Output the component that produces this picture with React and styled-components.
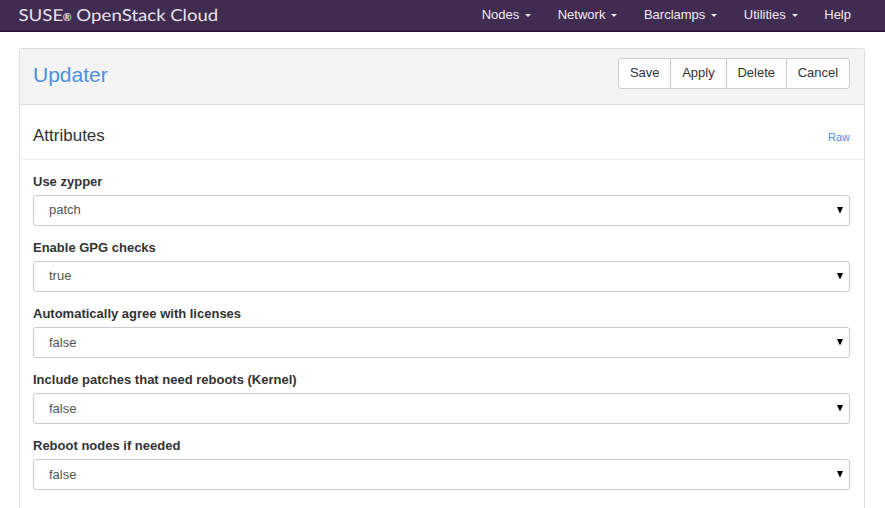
import React from "react";
import styled, { createGlobalStyle } from "styled-components";

const GlobalStyle = createGlobalStyle`
  * { box-sizing: border-box; }
  html, body { margin: 0; height: 100%; }
  body {
    background: #fff;
    color: #333;
    font: 13px/18px "Liberation Sans", Arial, sans-serif;
  }
`;

const Navbar = styled.header`
  display: flex;
  justify-content: space-between;
  height: 32px;
  padding: 0 34px 0 18px;
  background: #412c51;
  border-bottom: 1px solid #2a1138;
  box-shadow: inset 0 -1px 0 #38204a;
`;

const Brand = styled.svg`
  width: 202px;
  height: 30px;
  fill: #e6e1e9;
  font: 400 16.5px Lato, sans-serif;
  text-rendering: geometricPrecision;
`;

const Registered = styled.text`
  font-size: 11px;
  font-weight: 700;
`;

const Nav = styled.nav`
  display: flex;
  gap: 26.5px;
`;

const NavItem = styled.a`
  display: flex;
  align-items: center;
  height: 30px;
  color: #eeeaf1;
`;

const Caret = styled.span`
  margin: 1px 0 0 6px;
  border-top: 3px solid #eeeaf1;
  border-left: 3px solid transparent;
  border-right: 3px solid transparent;
`;

const Panel = styled.main`
  height: 460px;
  margin: 16px 20px 0 19px;
  border: 1px solid #ddd;
  border-bottom: 0;
  border-radius: 3px 3px 0 0;
`;

const PanelHeader = styled.div`
  display: flex;
  justify-content: space-between;
  align-items: flex-start;
  height: 56px;
  padding: 9px 14px 0 13px;
  background: #f4f4f4;
  border-bottom: 1px solid #ddd;
`;

const Title = styled.h1`
  margin: 5px 0 0;
  color: #4a90e2;
  font-size: 21px;
  font-weight: 400;
  line-height: 24px;
`;

const ButtonGroup = styled.div`
  display: flex;
`;

const Button = styled.button`
  height: 31px;
  padding: 0 10.85px 2px;
  border: 1px solid #ccc;
  background: #fff;
  color: #333;
  font: inherit;
  & + & { margin-left: -1px; }
  &:first-child { border-radius: 3px 0 0 3px; }
  &:last-child { border-radius: 0 3px 3px 0; }
`;

const SectionHeader = styled.div`
  display: flex;
  justify-content: space-between;
  height: 55px;
  padding: 21px 14px 0 13px;
  border-bottom: 1px solid #eee;
`;

const SectionTitle = styled.h2`
  margin: 0;
  font-size: 17px;
  font-weight: 400;
  line-height: 20px;
`;

const RawLink = styled.a`
  padding-top: 2px;
  color: #4a90e2;
  font-size: 11px;
`;

const Form = styled.form`
  display: grid;
  gap: 13px;
  padding: 13px 14px 0 13px;
`;

const Field = styled.div`
  height: 53px;
`;

const Label = styled.label`
  display: block;
  height: 22px;
  font-weight: 700;
`;

const Select = styled.div`
  display: flex;
  justify-content: space-between;
  height: 31px;
  padding: ${(p) => (p.$low ? 6 : 5)}px 6px 0 15px;
  border: 1px solid #ccc;
  border-radius: 3px;
  color: #555;
`;

const Arrow = styled.svg`
  flex: none;
  width: 6px;
  height: 6px;
  margin-top: ${(p) => (p.$low ? 5 : 6)}px;
  fill: #000;
`;

const navItems = [
  ["Nodes", true],
  ["Network", true],
  ["Barclamps", true],
  ["Utilities", true],
  ["Help", false],
];

const fields = [
  ["Use zypper", "patch"],
  ["Enable GPG checks", "true"],
  ["Automatically agree with licenses", "false", true],
  ["Include patches that need reboots (Kernel)", "false", true],
  ["Reboot nodes if needed", "false", true],
];

export default function App() {
  return (
    <>
      <GlobalStyle />
      <Navbar>
        <Brand viewBox="0 0 202 30">
          <text x="0.4" y="21" textLength="44.8" lengthAdjust="spacingAndGlyphs">SUSE</text>
          <Registered x="44.8" y="20.6" textLength="8.8" lengthAdjust="spacingAndGlyphs">®</Registered>
          <text x="58.3" y="21" textLength="89.5" lengthAdjust="spacingAndGlyphs">OpenStack</text>
          <text x="152.2" y="21" textLength="48" lengthAdjust="spacingAndGlyphs">Cloud</text>
        </Brand>
        <Nav>
          {navItems.map(([name, menu]) => (
            <NavItem key={name}>{name}{menu && <Caret />}</NavItem>
          ))}
        </Nav>
      </Navbar>
      <Panel>
        <PanelHeader>
          <Title>Updater</Title>
          <ButtonGroup>
            {["Save", "Apply", "Delete", "Cancel"].map((name) => (
              <Button key={name}>{name}</Button>
            ))}
          </ButtonGroup>
        </PanelHeader>
        <SectionHeader>
          <SectionTitle>Attributes</SectionTitle>
          <RawLink>Raw</RawLink>
        </SectionHeader>
        <Form>
          {fields.map(([label, value, low]) => (
            <Field key={label}>
              <Label>{label}</Label>
              <Select $low={low}>
                {value}
                <Arrow $low={low} viewBox="0 0 6 6"><path d="M0 0h6L3.5 5.7h-1z" /></Arrow>
              </Select>
            </Field>
          ))}
        </Form>
      </Panel>
    </>
  );
}
